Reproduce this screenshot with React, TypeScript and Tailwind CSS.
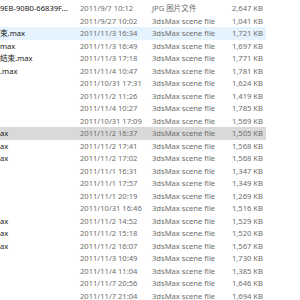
import React from "react";

const rows: [string, string, string, string][] = [
  ["9EB-90B0-66839F...", "2011/9/7 10:12", "JPG 图片文件", "2,647 KB"],
  ["", "2011/9/27 10:02", "3dsMax scene file", "1,041 KB"],
  ["束.max", "2011/11/3 16:34", "3dsMax scene file", "1,721 KB"],
  ["max", "2011/11/3 16:49", "3dsMax scene file", "1,697 KB"],
  ["结束.max", "2011/11/3 17:18", "3dsMax scene file", "1,771 KB"],
  [".max", "2011/11/4 10:47", "3dsMax scene file", "1,781 KB"],
  ["", "2011/10/31 17:31", "3dsMax scene file", "1,624 KB"],
  ["", "2011/11/2 11:26", "3dsMax scene file", "1,419 KB"],
  ["", "2011/11/4 10:27", "3dsMax scene file", "1,785 KB"],
  ["", "2011/10/31 17:09", "3dsMax scene file", "1,569 KB"],
  ["ax", "2011/11/2 16:37", "3dsMax scene file", "1,505 KB"],
  ["ax", "2011/11/2 17:41", "3dsMax scene file", "1,568 KB"],
  ["ax", "2011/11/2 17:02", "3dsMax scene file", "1,568 KB"],
  ["", "2011/11/1 16:31", "3dsMax scene file", "1,347 KB"],
  ["", "2011/11/1 17:57", "3dsMax scene file", "1,349 KB"],
  ["", "2011/11/1 20:19", "3dsMax scene file", "1,269 KB"],
  ["", "2011/10/31 16:46", "3dsMax scene file", "1,516 KB"],
  ["ax", "2011/11/2 14:52", "3dsMax scene file", "1,529 KB"],
  ["ax", "2011/11/2 15:18", "3dsMax scene file", "1,520 KB"],
  ["ax", "2011/11/2 16:07", "3dsMax scene file", "1,567 KB"],
  ["", "2011/11/3 10:49", "3dsMax scene file", "1,730 KB"],
  ["", "2011/11/4 11:04", "3dsMax scene file", "1,385 KB"],
  ["", "2011/11/7 20:56", "3dsMax scene file", "1,646 KB"],
  ["", "2011/11/7 21:04", "3dsMax scene file", "1,694 KB"],
];

export default function App() {
  return (
    <div
      className="w-[300px] h-[300px] overflow-hidden bg-white pt-[2px] text-[7.6px] leading-[12.5px]"
      style={{ fontFamily: '"Noto Sans", "Noto Sans CJK SC", sans-serif' }}
    >
      {rows.map((r, i) => {
        const bg = i === 2 ? "bg-[#e5f3ff]" : i === 10 ? "bg-[#d9d9d9]" : "";
        return (
          <div key={i} className={`flex h-[12.5px] w-[266px] items-center whitespace-nowrap ${bg}`}>
            <div className="w-[80px] overflow-hidden text-[#1a1a1a]">{r[0]}</div>
            <div className="w-[72px] text-[#6d6d6d]">{r[1]}</div>
            <div className="w-[70px] text-[#6d6d6d]">{r[2]}</div>
            <div className="w-[41px] text-right text-[#6d6d6d]">{r[3]}</div>
          </div>
        );
      })}
    </div>
  );
}
